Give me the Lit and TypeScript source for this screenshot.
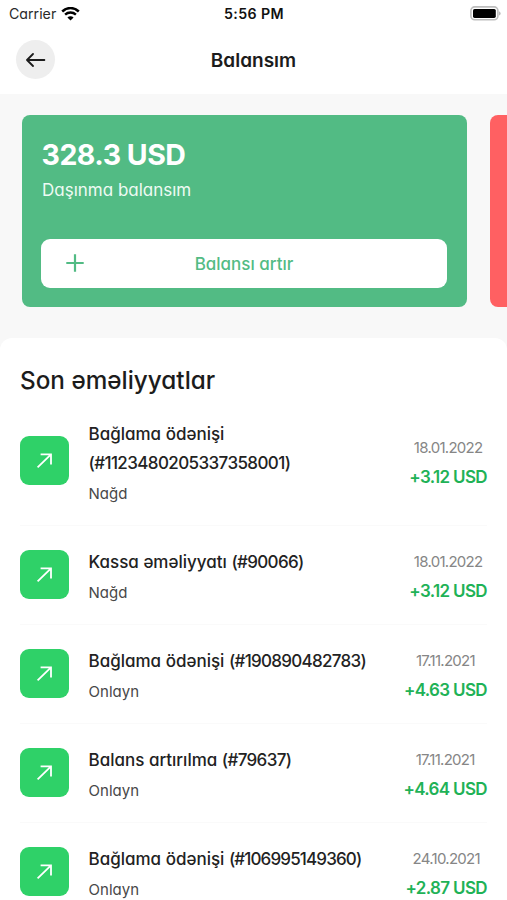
import { LitElement, html, css } from "lit";
import { customElement, property } from "lit/decorators.js";

interface Operation {
  label: string;
  code: string;
  method: string;
  date: string;
  amount: string;
  tracking: number;
}

const OPERATIONS: Operation[] = [
  { label: "Bağlama ödənişi", code: "(#1123480205337358001)", method: "Nağd", date: "18.01.2022", amount: "+3.12 USD", tracking: -0.6 },
  { label: "Kassa əməliyyatı", code: "(#90066)", method: "Nağd", date: "18.01.2022", amount: "+3.12 USD", tracking: -0.65 },
  { label: "Bağlama ödənişi", code: "(#190890482783)", method: "Onlayn", date: "17.11.2021", amount: "+4.63 USD", tracking: -0.7 },
  { label: "Balans artırılma", code: "(#79637)", method: "Onlayn", date: "17.11.2021", amount: "+4.64 USD", tracking: -0.65 },
  { label: "Bağlama ödənişi", code: "(#106995149360)", method: "Onlayn", date: "24.10.2021", amount: "+2.87 USD", tracking: -0.86 },
];

@customElement("status-bar")
export class StatusBar extends LitElement {
  static styles = css`
    :host {
      display: grid;
      grid-template-columns: 1fr auto 1fr;
      align-items: center;
      height: 27px;
      padding: 0 6px 0 9px;
      box-sizing: border-box;
      font-size: 14.2px;
      color: #111;
    }
    .carrier { display: flex; align-items: center; gap: 5px; color: #2a2a2a; }
    .time { margin-right: 2px; font-weight: 600; letter-spacing: 0.4px; }
    .battery { justify-self: end; }
    svg { display: block; }
  `;

  render() {
    return html`
      <div class="carrier">
        <span>Carrier</span>
        <svg width="19" height="14" viewBox="0 0 19 14" fill="none" stroke="#000">
          <path d="M1.2 4.5C6-.1 13-.1 17.8 4.5" stroke-width="2.5" />
          <path d="M4.1 7.7C7.2 4.8 11.8 4.8 14.9 7.7" stroke-width="2.4" />
          <path d="M9.5 13.5 6.4 10.5C8.2 8.9 10.8 8.9 12.6 10.5Z" fill="#000" stroke="none" />
        </svg>
      </div>
      <div class="time">5:56 PM</div>
      <svg class="battery" width="31" height="15" viewBox="0 0 31 15">
        <rect x="0.9" y="0.9" width="27" height="12.9" rx="3.8" fill="#fff" stroke="#bdbdbd" stroke-width="1.6" />
        <rect x="3" y="2.9" width="22.8" height="9" rx="1.6" fill="#000" />
        <path d="M29.2 5.2C31 5.9 31 8.9 29.2 9.6Z" fill="#aaa" />
      </svg>
    `;
  }
}

@customElement("balance-card")
export class BalanceCard extends LitElement {
  static styles = css`
    :host {
      display: flex;
      flex-direction: column;
      justify-content: space-between;
      flex: none;
      box-sizing: border-box;
      width: 445px;
      height: 192px;
      padding: 23px 20px 19.5px 19px;
      border-radius: 8px;
      background: #52bb84;
      color: #fff;
    }
    .sum { padding-left: 0.5px; font-size: 28.5px; font-weight: 700; line-height: 33px; letter-spacing: -0.5px; }
    .name { padding-left: 1px; margin-top: 7px; font-size: 17px; line-height: 24px; color: #eefaf3; }
    .action {
      display: grid;
      grid-template-columns: 68px 1fr 68px;
      align-items: center;
      height: 49px;
      border-radius: 9px;
      background: #fff;
      color: #52bb84;
      font-size: 17px;
      font-weight: 500;
      text-align: center;
    }
    .action span { padding-top: 1px; }
    svg { display: block; justify-self: center; }
  `;

  render() {
    return html`
      <div>
        <div class="sum">328.3 USD</div>
        <div class="name">Daşınma balansım</div>
      </div>
      <div class="action">
        <svg width="18" height="18" viewBox="0 0 18 18" stroke="#52bb84" stroke-width="2.2">
          <path d="M9 .3V17.7M.3 9H17.7" />
        </svg>
        <span>Balansı artır</span>
      </div>
    `;
  }
}

@customElement("operation-row")
export class OperationRow extends LitElement {
  @property({ attribute: false }) operation!: Operation;

  static styles = css`
    :host {
      display: flex;
      align-items: center;
      padding: 19.5px 0;
      border-bottom: 1px solid #fafafa;
      line-height: 29.5px;
      color: #222;
    }
    .badge {
      display: grid;
      place-items: center;
      flex: none;
      width: 49px;
      height: 49px;
      margin-right: 19.5px;
      border-radius: 9px;
      background: #2fd168;
    }
    .text { flex: 1; padding-top: 3px; margin-bottom: -3px; }
    .title { width: 290px; font-size: 17px; font-weight: 500; }
    .code { white-space: nowrap; }
    .method { font-size: 15px; letter-spacing: 0.05px; color: #484848; }
    .side { flex: none; padding-top: 2px; margin-bottom: -2px; text-align: center; line-height: 28.5px; }
    .date { font-size: 15px; letter-spacing: -0.72px; color: #868686; }
    .amount { font-size: 17px; font-weight: 600; letter-spacing: -0.65px; color: #1fb257; }
  `;

  render() {
    const o = this.operation;
    return html`
      <div class="badge">
        <svg width="17" height="17" viewBox="0 0 17 17" fill="none" stroke="#fff" stroke-width="1.8">
          <path d="M1.6 15.4 15 2.4M4.6 2.4H15V12.4" />
        </svg>
      </div>
      <div class="text">
        <div class="title">${o.label} <span class="code" style="letter-spacing:${o.tracking}px">${o.code}</span></div>
        <div class="method">${o.method}</div>
      </div>
      <div class="side">
        <div class="date">${o.date}</div>
        <div class="amount">${o.amount}</div>
      </div>
    `;
  }
}

@customElement("app-root")
export class AppRoot extends LitElement {
  static styles = css`
    :host {
      display: flex;
      flex-direction: column;
      height: 900px;
      overflow: hidden;
      background: #f8f8f8;
      font-family: Inter, "Open Sans", sans-serif;
      font-feature-settings: "cv11";
      color: #1c1c1c;
    }
    .top { flex: none; height: 94px; background: #fff; }
    .nav { display: grid; grid-template-columns: 39px 1fr 39px; align-items: center; height: 65px; padding: 0 16px; }
    .back { display: grid; place-items: center; width: 39px; height: 39px; border-radius: 50%; background: #eee; }
    .heading { padding-top: 2px; text-align: center; font-size: 19px; font-weight: 600; }
    .cards { display: flex; flex: none; gap: 23px; height: 223px; padding: 21px 0 0 22px; overflow: hidden; }
    .next { flex: none; width: 445px; height: 192px; border-radius: 8px; background: #ff6062; }
    .sheet { flex: 1; padding: 25px 20px 0; border-radius: 12px 12px 0 0; background: #fff; }
    .section { margin: 0; font-size: 24.3px; font-weight: 500; line-height: 34px; }
  `;

  render() {
    return html`
      <div class="top">
        <status-bar></status-bar>
        <div class="nav">
          <div class="back">
            <svg width="20" height="16" viewBox="0 0 20 16" fill="none" stroke="#1c1c1c" stroke-width="1.8" stroke-linecap="round" stroke-linejoin="round">
              <path d="M18.4 8H1.3M7 2 1 8 7 14" />
            </svg>
          </div>
          <div class="heading">Balansım</div>
        </div>
      </div>
      <div class="cards">
        <balance-card></balance-card>
        <div class="next"></div>
      </div>
      <div class="sheet">
        <h2 class="section">Son əməliyyatlar</h2>
        ${OPERATIONS.map((o) => html`<operation-row .operation=${o}></operation-row>`)}
      </div>
    `;
  }
}
